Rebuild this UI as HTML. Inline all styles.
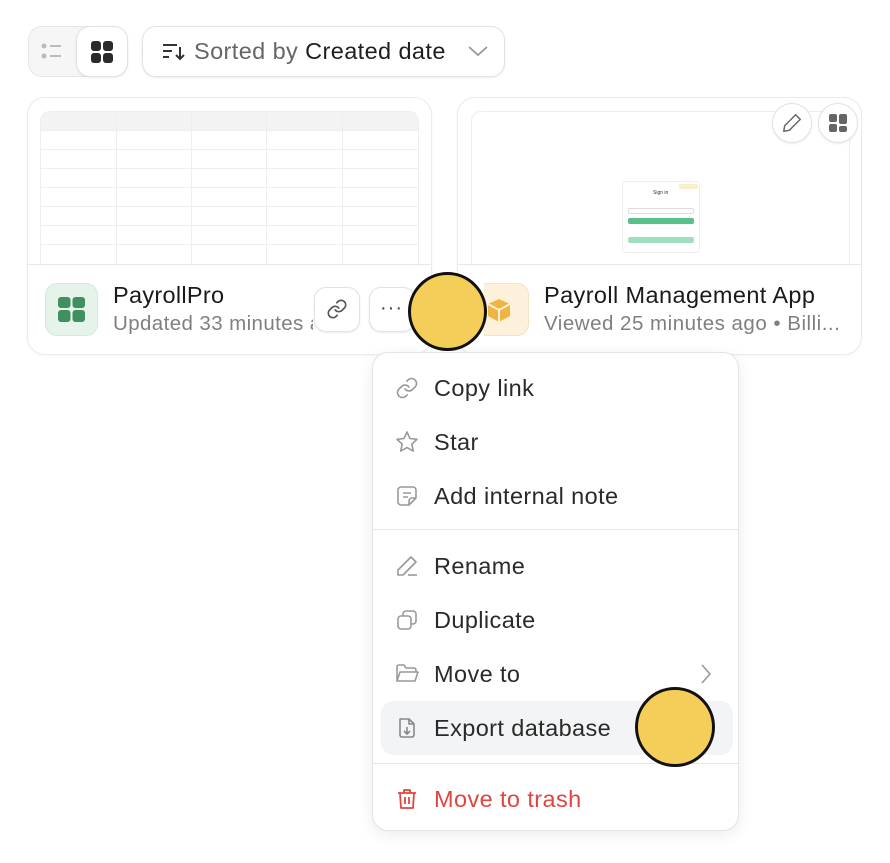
<!DOCTYPE html>
<html><head><meta charset="utf-8"><style>
*{box-sizing:border-box;margin:0;padding:0}
body{width:890px;height:863px;background:#fff;font-family:"Liberation Sans",sans-serif;position:relative;overflow:hidden;color:#1f1f1f}
.abs{position:absolute}
.btn{position:absolute;background:#fff;border:1px solid #e2e2e2;border-radius:12px;box-shadow:0 1px 2px rgba(0,0,0,.08)}
.card{position:absolute;border:1px solid #ebebeb;border-radius:18px;background:#fff;box-shadow:0 1px 3px rgba(0,0,0,.04);overflow:hidden}
.item{position:absolute;left:0;width:100%;height:54px;font-size:23.5px;letter-spacing:0.4px;color:#2a2a2a;display:flex;align-items:center}
.item svg{position:absolute;left:22px}
.item span{position:absolute;left:61px}
.circle{position:absolute;background:#f5ce5a;border:3px solid #111;border-radius:50%}
</style></head><body>
<div class="abs" style="left:28px;top:26px;width:100px;height:51px;background:#f6f6f6;border:1px solid #e6e6e6;border-radius:14px"></div>
<svg class="abs" style="left:40px;top:42px" width="24" height="20" viewBox="0 0 24 20"><circle cx="4" cy="4" r="2.5" fill="#bbb"/><circle cx="4" cy="14" r="2.5" fill="#bbb"/><rect x="10" y="3" width="11" height="2" fill="#bbb"/><rect x="10" y="13" width="11" height="2" fill="#bbb"/></svg>
<div class="btn" style="left:76px;top:26px;width:52px;height:51px;border-radius:14px"></div>
<svg class="abs" style="left:91px;top:41px" width="22" height="22" viewBox="0 0 22 22"><rect x="0" y="0" width="10" height="10" rx="3" fill="#2b2b2b"/><rect x="12" y="0" width="10" height="10" rx="3" fill="#2b2b2b"/><rect x="0" y="12" width="10" height="10" rx="3" fill="#2b2b2b"/><rect x="12" y="12" width="10" height="10" rx="3" fill="#2b2b2b"/></svg>
<div class="btn" style="left:142px;top:26px;width:363px;height:51px;border-radius:14px"></div>
<svg class="abs" style="left:162px;top:42px" width="24" height="20" viewBox="0 0 24 20" fill="none" stroke="#333" stroke-width="2"><path d="M1 3h14M1 9h9M1 15h6M18 5v12M14 13l4 4 4-4"/></svg>
<div class="abs" style="left:194px;top:38px;font-size:23.5px;letter-spacing:0.4px;color:#666;white-space:nowrap">Sorted by <span style="color:#1f1f1f">Created date</span></div>
<svg class="abs" style="left:467px;top:44px" width="22" height="14" viewBox="0 0 22 14" fill="none" stroke="#999" stroke-width="1.8"><path d="M2 3l9 8 9-8"/></svg>

<div class="card" style="left:27px;top:97px;width:405px;height:258px">
 <div class="abs" style="left:12px;top:13px;width:379px;height:153px;border:1px solid #eee;border-bottom:none;border-radius:10px 10px 0 0;overflow:hidden;background:#fff">
  <div class="abs" style="left:0;top:0;width:100%;height:18px;background:#f3f3f3"></div>
  <svg class="abs" style="left:0;top:0" width="379" height="153"><g stroke="#eee" stroke-width="1"><path d="M75.5 0v153M150.5 0v153M225.5 0v153M301.5 0v153"/><path d="M0 18.5h379M0 37.5h379M0 56.5h379M0 75.5h379M0 94.5h379M0 113.5h379M0 132.5h379"/></g></svg>
 </div>
 <div class="abs" style="left:0;top:166px;width:100%;height:1px;background:#e8e8e8"></div>
 <div class="abs" style="left:17px;top:185px;width:53px;height:53px;border-radius:12px;background:#e6f3ea;border:1px solid #d6e8dc"></div>
 <svg class="abs" style="left:30px;top:199px" width="27" height="25" viewBox="0 0 27 25"><rect x="0" y="0" width="12.5" height="11" rx="3" fill="#3f8f5f"/><rect x="14.5" y="0" width="12.5" height="11" rx="3" fill="#3f8f5f"/><rect x="0" y="13" width="12.5" height="12" rx="3" fill="#3f8f5f"/><rect x="14.5" y="13" width="12.5" height="12" rx="3" fill="#3f8f5f"/></svg>
 <div class="abs" style="left:85px;top:184px;font-size:23.5px;letter-spacing:0.3px;color:#1a1a1a">PayrollPro</div>
 <div class="abs" style="left:85px;top:214px;font-size:20.5px;letter-spacing:0.4px;color:#808080;white-space:nowrap;width:200px;overflow:hidden">Updated 33 minutes ago</div>
</div>
<div class="btn" style="left:314px;top:287px;width:46px;height:45px"></div>
<svg class="abs" style="left:326px;top:298px" width="22" height="22" viewBox="0 0 24 24" fill="none" stroke="#555" stroke-width="1.8" stroke-linecap="round"><path d="M10 13a5 5 0 007.5.5l3-3a5 5 0 00-7-7l-1.7 1.7"/><path d="M14 11a5 5 0 00-7.5-.5l-3 3a5 5 0 007 7l1.7-1.7"/></svg>
<div class="btn" style="left:369px;top:287px;width:46px;height:45px"></div>
<div class="abs" style="left:380px;top:297px;font-size:20px;color:#444;letter-spacing:1px">···</div>

<div class="card" style="left:457px;top:97px;width:405px;height:258px">
 <div class="abs" style="left:13px;top:13px;width:379px;height:153px;border:1px solid #eee;border-bottom:none;border-radius:10px 10px 0 0;background:#fff"></div>
 <div class="abs" style="left:164px;top:83px;width:78px;height:72px;border:1px solid #eee;border-radius:3px;background:#fff">
  <div class="abs" style="left:56px;top:2px;width:19px;height:5px;background:#fbeecb;border-radius:2px"></div>
  <div class="abs" style="left:30px;top:8px;font-size:5px;color:#333">Sign in</div>
  <div class="abs" style="left:5px;top:26px;width:66px;height:6px;border:1px solid #ddd;border-radius:2px"></div>
  <div class="abs" style="left:5px;top:36px;width:66px;height:6px;background:#58c08b;border-radius:2px"></div>
  <div class="abs" style="left:5px;top:55px;width:66px;height:6px;background:#9fe0bf;border-radius:2px"></div>
 </div>
 <div class="abs" style="left:0;top:166px;width:100%;height:1px;background:#e8e8e8"></div>
 <div class="abs" style="left:26px;top:185px;width:45px;height:53px;border-radius:0 12px 12px 0;background:#fdf1dc;border:1px solid #f3e3c3;border-left:none"></div>
 <div class="abs" style="left:86px;top:184px;font-size:23.5px;letter-spacing:0.4px;color:#1a1a1a;white-space:nowrap">Payroll Management App</div>
 <div class="abs" style="left:86px;top:214px;font-size:20.5px;letter-spacing:0.5px;color:#808080;white-space:nowrap">Viewed 25 minutes ago • Billi...</div>
</div>
<svg class="abs" style="left:485px;top:296px" width="28" height="28" viewBox="0 0 28 28"><path d="M14 3l11 5v12l-11 6-11-6V8z" fill="#f2b441"/><path d="M3 8l11 6 11-6" stroke="#fdf1dc" stroke-width="2" fill="none"/><path d="M14 14v12" stroke="#fdf1dc" stroke-width="2"/></svg>
<div class="btn" style="left:772px;top:103px;width:40px;height:40px;border-radius:20px"></div>
<svg class="abs" style="left:781px;top:112px" width="22" height="22" viewBox="0 0 24 24" fill="none" stroke="#666" stroke-width="1.6" stroke-linejoin="round"><path d="M16 3l5 5L9 20l-6 1 1-6z"/></svg>
<div class="btn" style="left:818px;top:103px;width:40px;height:40px;border-radius:20px"></div>
<svg class="abs" style="left:829px;top:114px" width="18" height="18" viewBox="0 0 18 18"><rect x="0" y="0" width="8" height="8" rx="2" fill="#666"/><rect x="10" y="0" width="8" height="10" rx="2" fill="#666"/><rect x="0" y="10" width="8" height="8" rx="2" fill="#666"/><rect x="10" y="12" width="8" height="6" rx="2" fill="#666"/></svg>

<div class="abs" style="left:372px;top:352px;width:367px;height:479px;background:#fff;border:1px solid #e4e4e4;border-radius:16px;box-shadow:0 4px 16px rgba(0,0,0,.08)">
 <div class="item" style="top:8px"><svg width="24" height="24" viewBox="0 0 24 24" fill="none" stroke="#999" stroke-width="1.6" stroke-linecap="round"><path d="M10 13a5 5 0 007.5.5l3-3a5 5 0 00-7-7l-1.7 1.7"/><path d="M14 11a5 5 0 00-7.5-.5l-3 3a5 5 0 007 7l1.7-1.7"/></svg><span>Copy link</span></div>
 <div class="item" style="top:62px"><svg width="24" height="24" viewBox="0 0 24 24" fill="none" stroke="#999" stroke-width="1.6" stroke-linejoin="round"><path d="M12 2l3 6.5 7 .8-5.2 4.8 1.5 7L12 17.6 5.7 21.1l1.5-7L2 9.3l7-.8z"/></svg><span>Star</span></div>
 <div class="item" style="top:116px"><svg width="24" height="24" viewBox="0 0 24 24" fill="none" stroke="#999" stroke-width="1.6" stroke-linejoin="round"><path d="M14 21H6a3 3 0 01-3-3V6a3 3 0 013-3h12a3 3 0 013 3v8l-7 7z"/><path d="M8 9h8M8 13h5M14 21v-4a3 3 0 013-3h4"/></svg><span>Add internal note</span></div>
 <div class="abs" style="left:0;top:176px;width:100%;height:1px;background:#e6e6e6"></div>
 <div class="item" style="top:186px"><svg width="24" height="24" viewBox="0 0 24 24" fill="none" stroke="#999" stroke-width="1.6" stroke-linejoin="round"><path d="M16 3l5 5L8 21H3v-5z"/><path d="M13 21h9"/></svg><span>Rename</span></div>
 <div class="item" style="top:240px"><svg width="24" height="24" viewBox="0 0 24 24" fill="none" stroke="#999" stroke-width="1.6"><rect x="3" y="8" width="13" height="13" rx="3"/><path d="M8 8V6a3 3 0 013-3h7a3 3 0 013 3v7a3 3 0 01-3 3h-2"/></svg><span>Duplicate</span></div>
 <div class="item" style="top:294px"><svg width="24" height="24" viewBox="0 0 24 24" fill="none" stroke="#999" stroke-width="1.6" stroke-linejoin="round"><path d="M2 19V5a2 2 0 012-2h5l2 3h8a2 2 0 012 2v2"/><path d="M2 19l3-9h18l-3 9z"/></svg><span>Move to</span>
  <svg style="left:326px" width="14" height="24" viewBox="0 0 14 24" fill="none" stroke="#999" stroke-width="1.6"><path d="M3 3l8 9-8 9"/></svg></div>
 <div class="abs" style="left:8px;top:348px;width:352px;height:54px;background:#f3f4f6;border-radius:12px"></div>
 <div class="item" style="top:348px"><svg width="24" height="24" viewBox="0 0 24 24" fill="none" stroke="#888" stroke-width="1.6" stroke-linejoin="round"><path d="M5 3h9l5 5v11a2 2 0 01-2 2H7a2 2 0 01-2-2z"/><path d="M14 3v5h5M12 11v7M9 15l3 3 3-3"/></svg><span>Export database</span></div>
 <div class="abs" style="left:0;top:410px;width:100%;height:1px;background:#e6e6e6"></div>
 <div class="item" style="top:419px;color:#e0463f"><svg width="24" height="24" viewBox="0 0 24 24" fill="none" stroke="#e0463f" stroke-width="1.8" stroke-linejoin="round"><path d="M3 6h18M9 6V3h6v3M5 6l1 15h12l1-15M10 10v7M14 10v7"/></svg><span>Move to trash</span></div>
</div>

<div class="circle" style="left:408px;top:272px;width:79px;height:79px"></div>
<div class="circle" style="left:635px;top:687px;width:80px;height:80px"></div>
</body></html>
